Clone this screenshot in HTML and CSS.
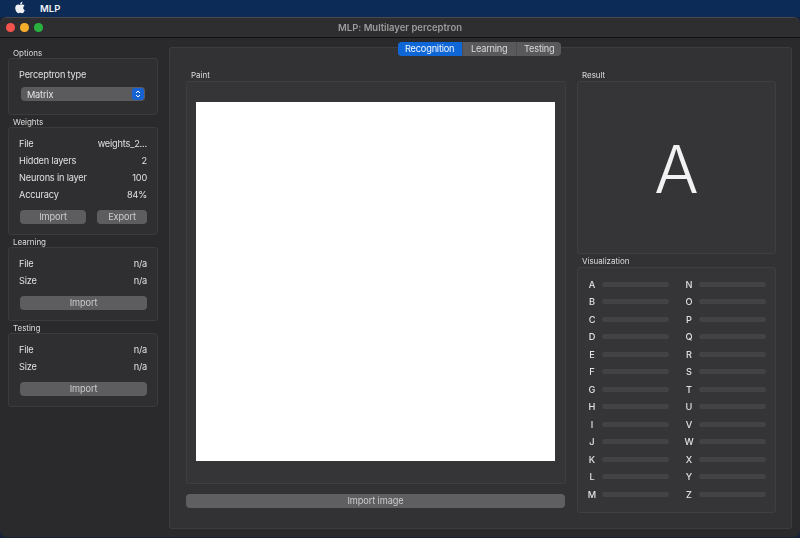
FILE: index.html
```html
<!DOCTYPE html>
<html lang="en">
<head>
<meta charset="utf-8">
<title>MLP: Multilayer perceptron</title>
<link rel="stylesheet" href="styles.css">
</head>
<body>
<div class="menubar">
  <svg class="apple" viewBox="0 0 384 512"><path d="M318.7 268.7c-.2-36.7 16.4-64.4 50-84.8-18.8-26.9-47.2-41.7-84.7-44.6-35.5-2.8-74.3 20.7-88.5 20.7-15 0-49.4-19.7-76.4-19.7C63.3 141.2 4 184.8 4 273.5q0 39.3 14.4 81.2c12.8 36.7 59 126.7 107.2 125.2 25.2-.6 43-17.9 75.8-17.9 31.8 0 48.3 17.9 76.4 17.9 48.6-.7 90.4-82.5 102.6-119.3-65.2-30.7-61.7-90-61.7-91.9zm-56.6-164.2c27.3-32.4 24.8-61.9 24-72.5-24.1 1.4-52 16.4-67.9 34.9-17.5 19.8-27.8 44.3-25.6 71.9 26.1 2 49.9-11.4 69.5-34.3z"/></svg>
  <span class="appname">MLP</span>
</div>
<div class="window">
  <div class="titlebar">
    <div class="lights"><i class="light red"></i><i class="light yellow"></i><i class="light green"></i></div>
    <div class="wintitle">MLP: Multilayer perceptron</div>
  </div>
  <div class="content">
    <aside class="sidebar">
      <section class="group">
        <h2 class="gtitle">Options</h2>
        <div class="box box-options">
          <div class="label">Perceptron type</div>
          <div class="select"><span>Matrix</span>
            <span class="stepper"><svg viewBox="0 0 8 10" class="chev"><path d="M2 4 4 2 6 4M2 6 4 8 6 6"/></svg></span>
          </div>
        </div>
      </section>
      <section class="group">
        <h2 class="gtitle">Weights</h2>
        <div class="box">
          <div class="row"><span>File</span><span>weights_2...</span></div>
          <div class="row"><span>Hidden layers</span><span>2</span></div>
          <div class="row"><span>Neurons in layer</span><span>100</span></div>
          <div class="row"><span>Accuracy</span><span>84%</span></div>
          <div class="btnrow"><button class="btn grow-a">Import</button><button class="btn grow-b">Export</button></div>
        </div>
      </section>
      <section class="group">
        <h2 class="gtitle">Learning</h2>
        <div class="box">
          <div class="row"><span>File</span><span>n/a</span></div>
          <div class="row"><span>Size</span><span>n/a</span></div>
          <div class="btnrow"><button class="btn wide">Import</button></div>
        </div>
      </section>
      <section class="group">
        <h2 class="gtitle">Testing</h2>
        <div class="box">
          <div class="row"><span>File</span><span>n/a</span></div>
          <div class="row"><span>Size</span><span>n/a</span></div>
          <div class="btnrow"><button class="btn wide">Import</button></div>
        </div>
      </section>
    </aside>
    <main class="panel">
      <div class="tabs"><span class="tab active">Recognition</span><span class="tab">Learning</span><span class="tab">Testing</span></div>
      <div class="col-left">
        <h2 class="gtitle">Paint</h2>
        <div class="box paintbox"><div class="canvas"></div></div>
        <button class="btn importimg">Import image</button>
      </div>
      <div class="col-right">
        <h2 class="gtitle">Result</h2>
        <div class="box resultbox">A</div>
        <h2 class="gtitle vis-title">Visualization</h2>
        <div class="box visbox">
          <div class="bar-row"><b>A</b><i></i></div>
          <div class="bar-row"><b>B</b><i></i></div>
          <div class="bar-row"><b>C</b><i></i></div>
          <div class="bar-row"><b>D</b><i></i></div>
          <div class="bar-row"><b>E</b><i></i></div>
          <div class="bar-row"><b>F</b><i></i></div>
          <div class="bar-row"><b>G</b><i></i></div>
          <div class="bar-row"><b>H</b><i></i></div>
          <div class="bar-row"><b>I</b><i></i></div>
          <div class="bar-row"><b>J</b><i></i></div>
          <div class="bar-row"><b>K</b><i></i></div>
          <div class="bar-row"><b>L</b><i></i></div>
          <div class="bar-row"><b>M</b><i></i></div>
          <div class="bar-row"><b>N</b><i></i></div>
          <div class="bar-row"><b>O</b><i></i></div>
          <div class="bar-row"><b>P</b><i></i></div>
          <div class="bar-row"><b>Q</b><i></i></div>
          <div class="bar-row"><b>R</b><i></i></div>
          <div class="bar-row"><b>S</b><i></i></div>
          <div class="bar-row"><b>T</b><i></i></div>
          <div class="bar-row"><b>U</b><i></i></div>
          <div class="bar-row"><b>V</b><i></i></div>
          <div class="bar-row"><b>W</b><i></i></div>
          <div class="bar-row"><b>X</b><i></i></div>
          <div class="bar-row"><b>Y</b><i></i></div>
          <div class="bar-row"><b>Z</b><i></i></div>
        </div>
      </div>
    </main>
  </div>
</div>
</body>
</html>
```
FILE: styles.css
```css
* { box-sizing: border-box; }
html, body { margin: 0; padding: 0; }
body {
  width: 800px;
  height: 538px;
  overflow: hidden;
  background: #16233a;
  font-family: Inter, "Liberation Sans", sans-serif;
  font-size: 9.2px;
  letter-spacing: -0.18px;
  color: #e0e0e0;
  display: flex;
  flex-direction: column;
}
.menubar {
  height: 17px;
  flex: none;
  background: #0d2b57;
  color: #f2f4f8;
  display: flex;
  align-items: flex-start;
  padding: 1px 0 0 15px;
}
.apple { width: 10px; height: 13px; fill: #eef0f4; }
.appname { margin-left: 15px; font-size: 9.5px; font-weight: 600; line-height: 15px; letter-spacing: 0; }
.window {
  height: 520px;
  flex: none;
  background: #2a2a2c;
  border-radius: 7px;
  border-top: 1px solid #4a4a4c;
  display: flex;
  flex-direction: column;
  will-change: transform;
}
.titlebar {
  height: 20px;
  flex: none;
  background: #2e2e30;
  border-bottom: 1px solid #111;
  border-radius: 7px 7px 0 0;
  display: flex;
  align-items: center;
  justify-content: center;
  position: relative;
}
.lights { position: absolute; left: 6px; top: 5px; display: flex; gap: 5.5px; }
.light { width: 8.5px; height: 8.5px; border-radius: 50%; display: block; }
.red { background: #f4524c; }
.yellow { background: #f5ad2c; }
.green { background: #2ab03f; }
.wintitle { color: #9b9b9b; font-weight: 600; font-size: 9.5px; letter-spacing: -0.02px; }
.content { flex: 1; display: flex; padding: 9px 9px 8px 8px; gap: 11px; min-height: 0; }
.sidebar { width: 150px; flex: none; display: flex; flex-direction: column; gap: 1px; }
.gtitle { margin: 0 0 -1px 5px; font-size: 8px; font-weight: 400; line-height: 12px; letter-spacing: -0.03px; color: #dcdcdc; }
.panel .gtitle { margin-bottom: 0; line-height: 11px; }
.box { background: #2f2f31; border: 1px solid #3b3b3d; border-radius: 3px; }
.panel .box { background: #353537; border-color: #3f3f41; }
.group .box { padding: 7px 10px 10px 10px; }
.group .box-options { height: 57px; }
.label { line-height: 18px; height: 16px; }
.select {
  margin: 5px 2px 0 2px;
  height: 14px;
  background: #5b5b5d;
  border-radius: 4px;
  display: flex;
  align-items: center;
  justify-content: space-between;
  padding: 0 1.5px 0 6px;
  color: #e4e4e4;
}
.stepper { width: 11.5px; height: 12px; background: #1762d2; border-radius: 3px; display: flex; align-items: center; justify-content: center; }
.chev { width: 8px; height: 10px; fill: none; stroke: #fff; stroke-width: 1; }
.row { display: flex; justify-content: space-between; line-height: 18px; height: 17px; }
.btnrow { display: flex; justify-content: space-between; margin-top: 7px; padding-left: 1px; }
.btn {
  height: 14px;
  border: 0;
  padding: 0;
  background: #5d5d5f;
  border-radius: 4px;
  color: #cccccc;
  font-family: inherit;
  font-size: 9.2px;
  letter-spacing: -0.1px;
  line-height: 14px;
}
.grow-a { width: 66px; }
.grow-b { width: 50px; }
.wide { width: 100%; }
.panel {
  flex: 1;
  position: relative;
  background: #323234;
  border: 1px solid #3d3d3f;
  border-radius: 3px;
  display: flex;
  gap: 11px;
  padding: 22px 15px 15px 16px;
}
.tabs {
  position: absolute;
  top: -6px;
  left: 228px;
  height: 14px;
  background: #59595b;
  border-radius: 4px;
  display: flex;
  color: #dadada;
  line-height: 14px;
}
.tab { padding: 0 8px 0 7.5px; border-left: 1px solid #4d4d4f; }
.tab:first-child { border-left: 0; }
.tab:last-child { padding-right: 6px; }
.tab.active { background: #0f66d6; color: #f4f8ff; border-radius: 4px 0 0 4px; padding: 0 8px 0 7px; }
.col-left { width: 380px; flex: none; display: flex; flex-direction: column; }
.paintbox { height: 403px; padding: 20px 9px 0 9px; }
.canvas { width: 359px; height: 359px; background: #fff; }
.importimg { margin-top: 10px; height: 14px; width: 379px; background: #5f5f61; }
.col-right { width: 199px; flex: none; display: flex; flex-direction: column; }
.resultbox {
  height: 173px;
  padding-top: 2px;
  display: flex;
  align-items: center;
  justify-content: center;
  font-size: 66px;
  letter-spacing: 0;
  font-weight: 300;
  color: #f2f2f2;
}
.vis-title { margin-top: 2px; }
.visbox {
  height: 246px;
  display: grid;
  grid-template-rows: repeat(13, 17.5px);
  grid-auto-flow: column;
  grid-template-columns: 97px 97px;
  padding: 7.5px 0 0 4px;
}
.bar-row { display: flex; align-items: center; }
.bar-row b { width: 20px; text-align: center; font-weight: 500; color: #e2e2e2; letter-spacing: 0; }
.bar-row i { width: 67px; height: 5px; background: #434345; border-radius: 3px; display: block; }
```
